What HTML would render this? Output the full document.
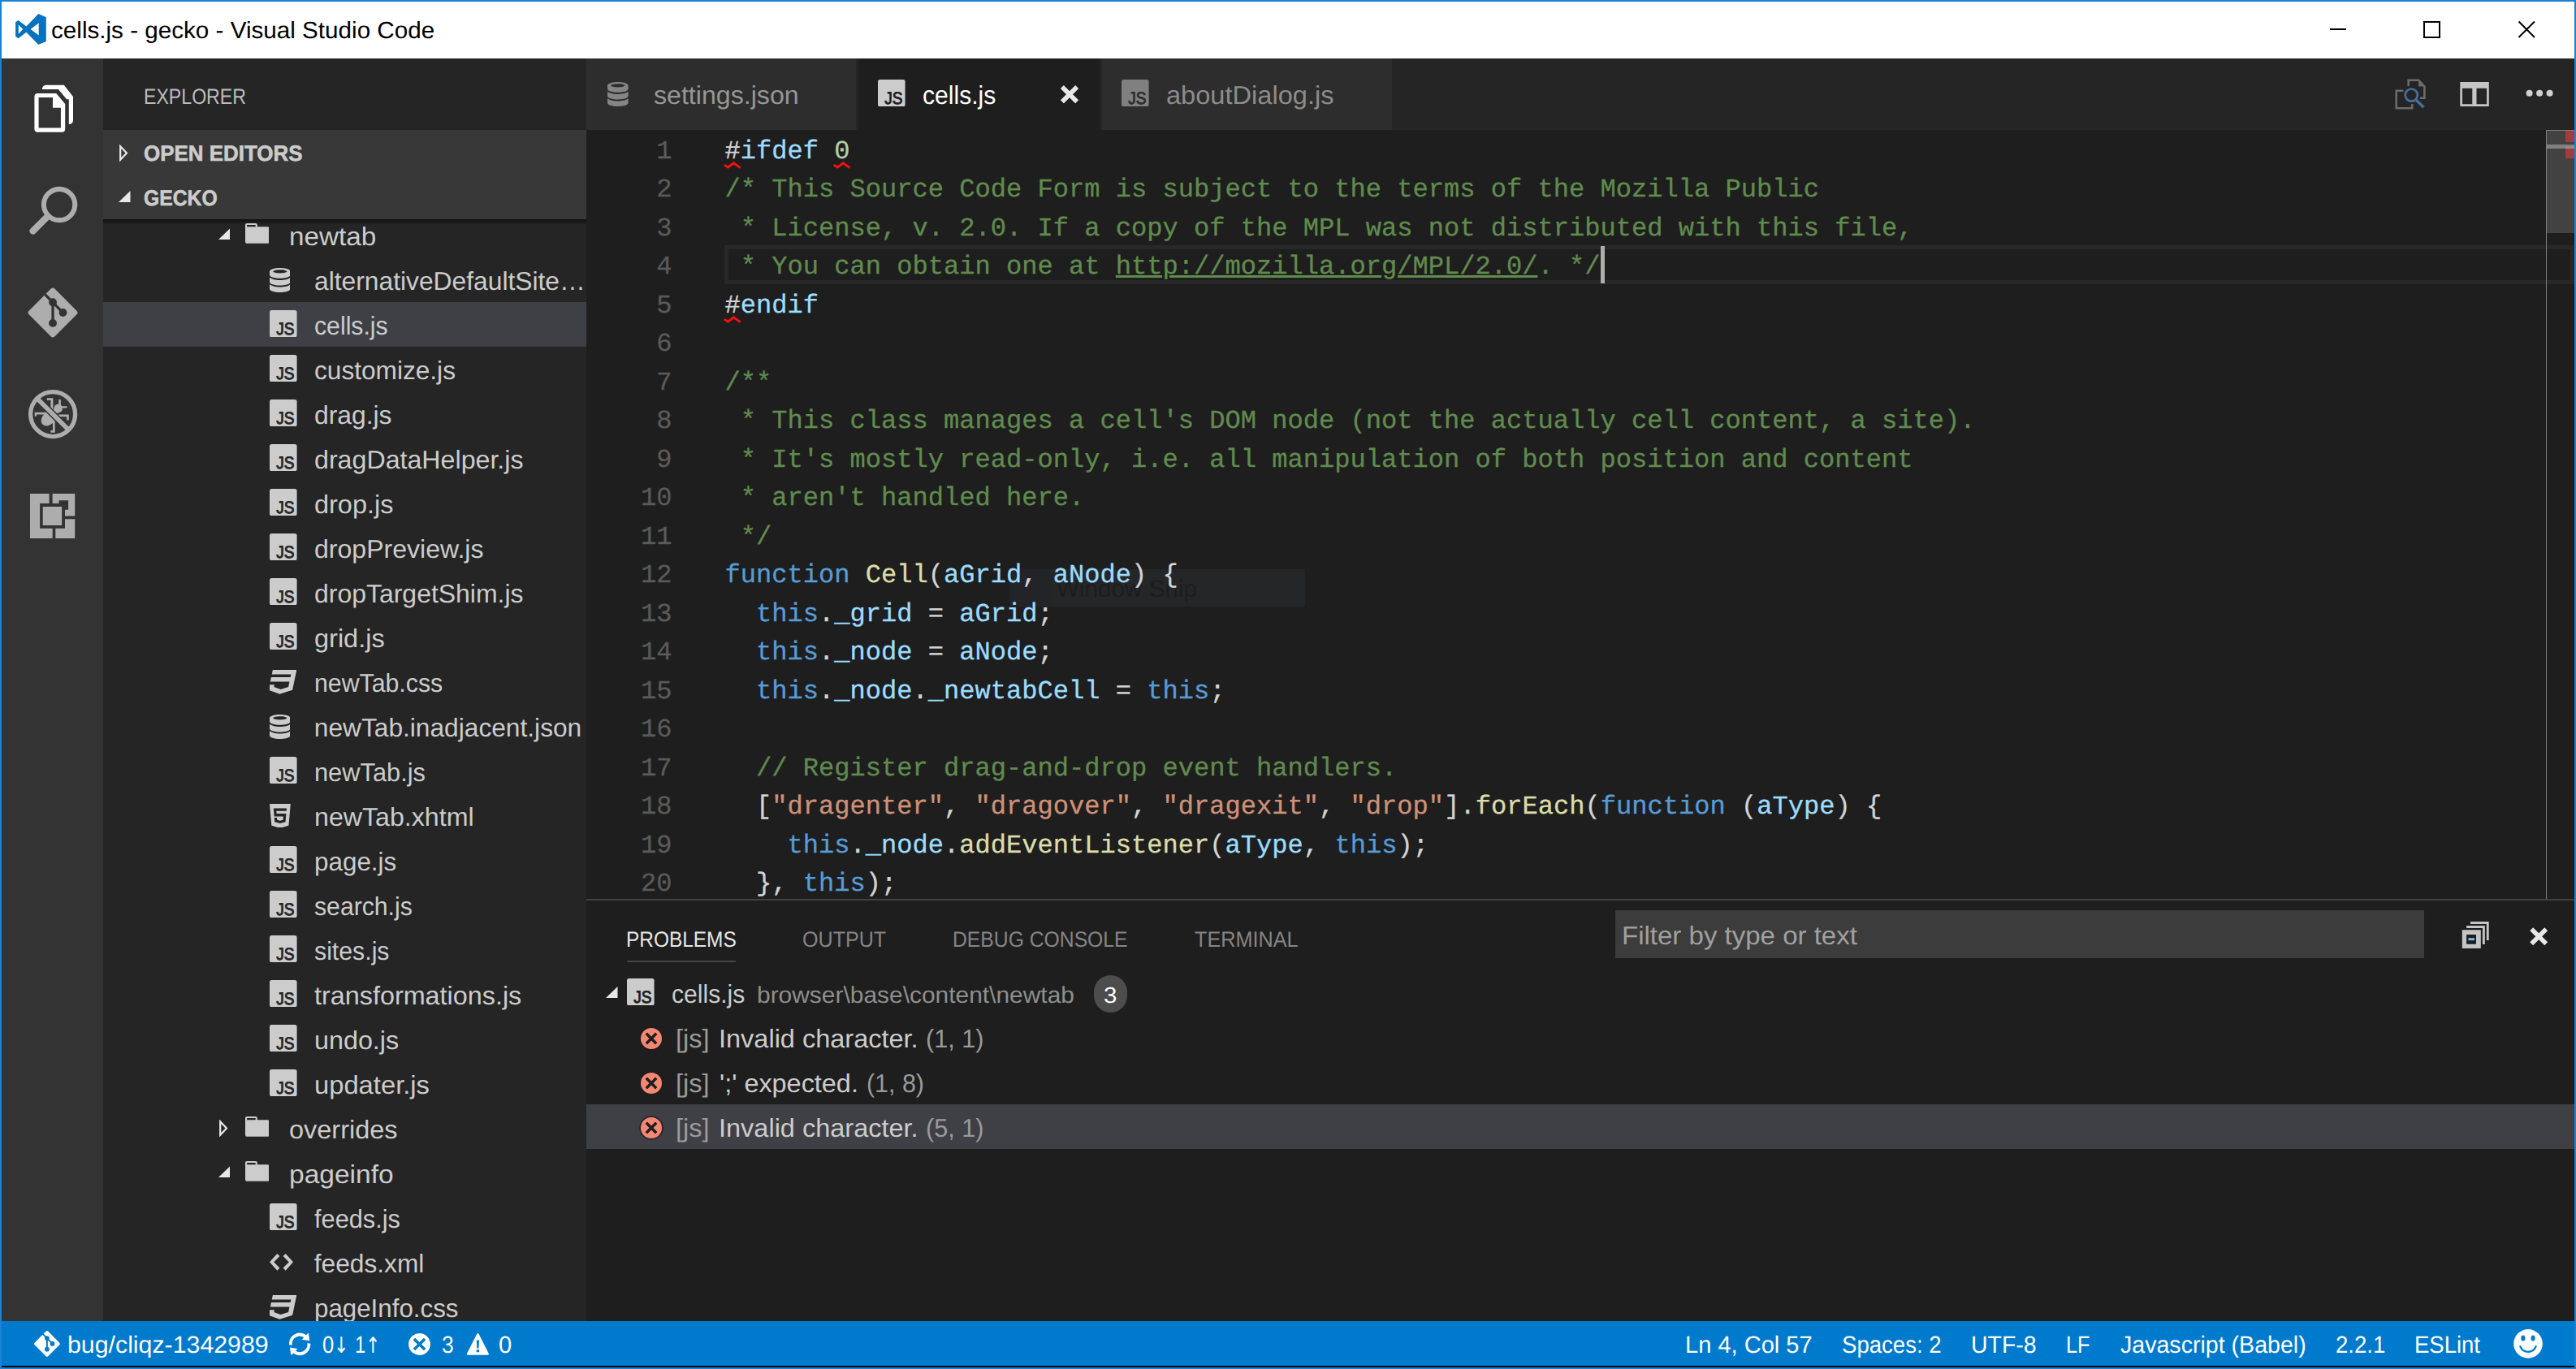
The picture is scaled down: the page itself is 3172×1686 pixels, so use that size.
<!DOCTYPE html>
<html lang="en"><head><meta charset="utf-8"><title>cells.js - gecko - Visual Studio Code</title>
<style>
html,body{margin:0;padding:0}
body{width:3172px;height:1686px;overflow:hidden;position:relative;background:#1883d7;font-family:"Liberation Sans",sans-serif;text-rendering:geometricPrecision;-webkit-font-smoothing:antialiased}
#bg div{position:absolute}
#ic>*{position:absolute}
.t{position:absolute;white-space:pre;line-height:1;transform-origin:0 0}
#code{position:absolute;left:0;top:160px;width:3135px;height:947px;overflow:hidden;font-family:"Liberation Mono",monospace;font-size:32.08px;color:#d4d4d4;-webkit-text-stroke:0.3px}
#code .l{position:absolute;left:892.5px;height:47.5px;line-height:47.5px;white-space:pre}
#code .n{position:absolute;left:722px;width:105.5px;height:47.5px;line-height:47.5px;text-align:right;color:#5a5a5a;white-space:pre}
#code .l span,#code .n span{position:relative;top:2.5px}
.c{color:#608b4e}.k{color:#569cd6}.v{color:#9cdcfe}.f{color:#dcdcaa}.s{color:#ce9178}.d{color:#b5cea8}

</style></head>
<body>
<div id="bg">
<div style="left:2px;top:2px;width:3168px;height:70px;background:#ffffff;"></div>
<div style="left:2px;top:72px;width:125px;height:1555px;background:#333333;"></div>
<div style="left:127px;top:72px;width:595px;height:1555px;background:#252526;"></div>
<div style="left:722px;top:72px;width:2448px;height:88px;background:#252526;"></div>
<div style="left:722px;top:72px;width:332px;height:88px;background:#2d2d2d;"></div>
<div style="left:1056.5px;top:72px;width:297.5px;height:88px;background:#1e1e1e;"></div>
<div style="left:1356.5px;top:72px;width:357.3px;height:88px;background:#2d2d2d;"></div>
<div style="left:722px;top:160px;width:2448px;height:1467px;background:#1e1e1e;"></div>
<div style="left:2px;top:1627px;width:3168px;height:55px;background:#007acc;"></div>
<div style="left:2px;top:1682px;width:3168px;height:2px;background:#000000;"></div>
<div style="left:127px;top:372px;width:595px;height:55px;background:#3f3f46;"></div>
<div style="left:127px;top:160px;width:595px;height:110px;background:#383838;"></div>
<div style="left:127px;top:270px;width:595px;height:7px;background:linear-gradient(rgba(0,0,0,.55),rgba(0,0,0,0));"></div>
<div style="left:892px;top:302px;width:2278px;height:48px;background:transparent;box-sizing:border-box;border:5px solid #282828"></div>
<div style="left:3135px;top:160px;width:1.3px;height:947px;background:#808080;"></div>
<div style="left:3136px;top:160px;width:34px;height:127px;background:#424242;"></div>
<div style="left:3159px;top:160px;width:11px;height:15px;background:#a23d3d;"></div>
<div style="left:3136px;top:178px;width:34px;height:5px;background:#808080;"></div>
<div style="left:3159px;top:180px;width:11px;height:3px;background:#988888;"></div>
<div style="left:3135px;top:160px;width:35px;height:1px;background:#7e7e7e;"></div>
<div style="left:3159px;top:183px;width:11px;height:12px;background:#a23d3d;"></div>
<div style="left:1971px;top:303px;width:5px;height:46px;background:#aeafad;"></div>
<div style="left:1243px;top:701px;width:364px;height:46px;background:#252628;"></div>
<div style="left:1243px;top:701px;width:51.5px;height:46px;background:#222427;"></div>
<div style="left:722px;top:1107px;width:2448px;height:2px;background:#414141;"></div>
<div style="left:772px;top:1183px;width:134px;height:2px;background:#45454d;"></div>
<div style="left:722px;top:1360px;width:2448px;height:55px;background:#3f3f46;"></div>
<div style="left:1989px;top:1121px;width:996px;height:59px;background:#3c3c3c;"></div>
</div>
<div id="ic">
<svg style="left:268.5px;top:281px" width="14.5" height="14" viewBox="0 0 14.5 14"><path fill="#e8e8e8" d="M14.500 0V14H0z"/></svg>
<svg style="left:301.8px;top:275px" width="29.6" height="24.8" viewBox="0 2 14 12" preserveAspectRatio="none"><path fill="#cccccc" d="M13 4H7V3c0-.66-.31-1-1-1H1c-.55 0-1 .45-1 1v10c0 .55.45 1 1 1h12c.55 0 1-.45 1-1V5c0-.55-.45-1-1-1zM6 4H1V3h5v1z"/></svg>
<svg style="left:331.7px;top:329.7px" width="25.6" height="30" viewBox="0 1 12 14" preserveAspectRatio="none"><path fill="#cccccc" d="M6 15c-3.31 0-6-.9-6-2v-2c0-.17.09-.34.21-.5.67.86 3 1.5 5.79 1.5s5.12-.64 5.79-1.5c.13.16.21.33.21.5v2c0 1.1-2.69 2-6 2zm0-4c-3.31 0-6-.9-6-2V7c0-.11.04-.21.09-.31.03-.06.07-.13.12-.19C.88 7.360 3.21 8 6 8s5.120-.64 5.790-1.500c.05.06.09.13.12.19.05.1.09.21.09.31v2c0 1.100-2.690 2-6 2zm0-4c-3.310 0-6-.9-6-2V3c0-1.100 2.690-2 6-2s6 .9 6 2v2c0 1.100-2.690 2-6 2zm0-5c-2.210 0-4 .45-4 1s1.790 1 4 1 4-.45 4-1-1.790-1-4-1z"/></svg>
<svg style="left:332px;top:382px" width="33.600" height="33.400" viewBox="0 0 33.600 33.400"><rect width="33.600" height="33.400" rx="2.600" fill="#cccccc"/><text x="8.300" y="30.400" font-family="Liberation Sans,sans-serif" font-size="21" textLength="22.3" lengthAdjust="spacingAndGlyphs" fill="#252526" stroke="#252526" stroke-width="0.900" stroke-linejoin="round">JS</text></svg>
<svg style="left:332px;top:437px" width="33.600" height="33.400" viewBox="0 0 33.600 33.400"><rect width="33.600" height="33.400" rx="2.600" fill="#cccccc"/><text x="8.300" y="30.400" font-family="Liberation Sans,sans-serif" font-size="21" textLength="22.3" lengthAdjust="spacingAndGlyphs" fill="#252526" stroke="#252526" stroke-width="0.900" stroke-linejoin="round">JS</text></svg>
<svg style="left:332px;top:492px" width="33.600" height="33.400" viewBox="0 0 33.600 33.400"><rect width="33.600" height="33.400" rx="2.600" fill="#cccccc"/><text x="8.300" y="30.400" font-family="Liberation Sans,sans-serif" font-size="21" textLength="22.3" lengthAdjust="spacingAndGlyphs" fill="#252526" stroke="#252526" stroke-width="0.900" stroke-linejoin="round">JS</text></svg>
<svg style="left:332px;top:547px" width="33.600" height="33.400" viewBox="0 0 33.600 33.400"><rect width="33.600" height="33.400" rx="2.600" fill="#cccccc"/><text x="8.300" y="30.400" font-family="Liberation Sans,sans-serif" font-size="21" textLength="22.3" lengthAdjust="spacingAndGlyphs" fill="#252526" stroke="#252526" stroke-width="0.900" stroke-linejoin="round">JS</text></svg>
<svg style="left:332px;top:602px" width="33.600" height="33.400" viewBox="0 0 33.600 33.400"><rect width="33.600" height="33.400" rx="2.600" fill="#cccccc"/><text x="8.300" y="30.400" font-family="Liberation Sans,sans-serif" font-size="21" textLength="22.3" lengthAdjust="spacingAndGlyphs" fill="#252526" stroke="#252526" stroke-width="0.900" stroke-linejoin="round">JS</text></svg>
<svg style="left:332px;top:657px" width="33.600" height="33.400" viewBox="0 0 33.600 33.400"><rect width="33.600" height="33.400" rx="2.600" fill="#cccccc"/><text x="8.300" y="30.400" font-family="Liberation Sans,sans-serif" font-size="21" textLength="22.3" lengthAdjust="spacingAndGlyphs" fill="#252526" stroke="#252526" stroke-width="0.900" stroke-linejoin="round">JS</text></svg>
<svg style="left:332px;top:712px" width="33.600" height="33.400" viewBox="0 0 33.600 33.400"><rect width="33.600" height="33.400" rx="2.600" fill="#cccccc"/><text x="8.300" y="30.400" font-family="Liberation Sans,sans-serif" font-size="21" textLength="22.3" lengthAdjust="spacingAndGlyphs" fill="#252526" stroke="#252526" stroke-width="0.900" stroke-linejoin="round">JS</text></svg>
<svg style="left:332px;top:767px" width="33.600" height="33.400" viewBox="0 0 33.600 33.400"><rect width="33.600" height="33.400" rx="2.600" fill="#cccccc"/><text x="8.300" y="30.400" font-family="Liberation Sans,sans-serif" font-size="21" textLength="22.3" lengthAdjust="spacingAndGlyphs" fill="#252526" stroke="#252526" stroke-width="0.900" stroke-linejoin="round">JS</text></svg>
<svg style="left:332px;top:825px" width="33.3" height="29.8" viewBox="77 -1408 1703 1600" preserveAspectRatio="none"><path fill="#cccccc" transform="scale(1,-1)" d="M275 1408h1505l-266 -1333l-804 -267l-698 267l71 356h297l-29 -147l422 -161l486 161l68 339h-1208l58 297h1209l38 191h-1208z"/></svg>
<svg style="left:331.7px;top:879.7px" width="25.6" height="30" viewBox="0 1 12 14" preserveAspectRatio="none"><path fill="#cccccc" d="M6 15c-3.31 0-6-.9-6-2v-2c0-.17.09-.34.21-.5.67.86 3 1.5 5.79 1.5s5.12-.64 5.79-1.5c.13.16.21.33.21.5v2c0 1.1-2.69 2-6 2zm0-4c-3.31 0-6-.9-6-2V7c0-.11.04-.21.09-.31.03-.06.07-.13.12-.19C.88 7.360 3.21 8 6 8s5.120-.64 5.790-1.500c.05.06.09.13.12.19.05.1.09.21.09.31v2c0 1.100-2.690 2-6 2zm0-4c-3.310 0-6-.9-6-2V3c0-1.100 2.690-2 6-2s6 .9 6 2v2c0 1.100-2.690 2-6 2zm0-5c-2.210 0-4 .45-4 1s1.790 1 4 1 4-.45 4-1-1.790-1-4-1z"/></svg>
<svg style="left:332px;top:932px" width="33.600" height="33.400" viewBox="0 0 33.600 33.400"><rect width="33.600" height="33.400" rx="2.600" fill="#cccccc"/><text x="8.300" y="30.400" font-family="Liberation Sans,sans-serif" font-size="21" textLength="22.3" lengthAdjust="spacingAndGlyphs" fill="#252526" stroke="#252526" stroke-width="0.900" stroke-linejoin="round">JS</text></svg>
<svg style="left:332.4px;top:989.7px" width="25.8" height="29.8" viewBox="0 -1408 1408 1600" preserveAspectRatio="none"><path fill="#cccccc" fill-rule="evenodd" transform="scale(1,-1)" d="M1130 939l16 175h-884l47 -534h612l-22 -228l-197 -53l-196 53l-13 140h-175l22 -278l362 -100h4v1l359 99l50 544h-644l-15 181h674zM0 1408h1408l-128 -1438l-578 -162l-574 162z"/></svg>
<svg style="left:332px;top:1042px" width="33.600" height="33.400" viewBox="0 0 33.600 33.400"><rect width="33.600" height="33.400" rx="2.600" fill="#cccccc"/><text x="8.300" y="30.400" font-family="Liberation Sans,sans-serif" font-size="21" textLength="22.3" lengthAdjust="spacingAndGlyphs" fill="#252526" stroke="#252526" stroke-width="0.900" stroke-linejoin="round">JS</text></svg>
<svg style="left:332px;top:1097px" width="33.600" height="33.400" viewBox="0 0 33.600 33.400"><rect width="33.600" height="33.400" rx="2.600" fill="#cccccc"/><text x="8.300" y="30.400" font-family="Liberation Sans,sans-serif" font-size="21" textLength="22.3" lengthAdjust="spacingAndGlyphs" fill="#252526" stroke="#252526" stroke-width="0.900" stroke-linejoin="round">JS</text></svg>
<svg style="left:332px;top:1152px" width="33.600" height="33.400" viewBox="0 0 33.600 33.400"><rect width="33.600" height="33.400" rx="2.600" fill="#cccccc"/><text x="8.300" y="30.400" font-family="Liberation Sans,sans-serif" font-size="21" textLength="22.3" lengthAdjust="spacingAndGlyphs" fill="#252526" stroke="#252526" stroke-width="0.900" stroke-linejoin="round">JS</text></svg>
<svg style="left:332px;top:1207px" width="33.600" height="33.400" viewBox="0 0 33.600 33.400"><rect width="33.600" height="33.400" rx="2.600" fill="#cccccc"/><text x="8.300" y="30.400" font-family="Liberation Sans,sans-serif" font-size="21" textLength="22.3" lengthAdjust="spacingAndGlyphs" fill="#252526" stroke="#252526" stroke-width="0.900" stroke-linejoin="round">JS</text></svg>
<svg style="left:332px;top:1262px" width="33.600" height="33.400" viewBox="0 0 33.600 33.400"><rect width="33.600" height="33.400" rx="2.600" fill="#cccccc"/><text x="8.300" y="30.400" font-family="Liberation Sans,sans-serif" font-size="21" textLength="22.3" lengthAdjust="spacingAndGlyphs" fill="#252526" stroke="#252526" stroke-width="0.900" stroke-linejoin="round">JS</text></svg>
<svg style="left:332px;top:1317px" width="33.600" height="33.400" viewBox="0 0 33.600 33.400"><rect width="33.600" height="33.400" rx="2.600" fill="#cccccc"/><text x="8.300" y="30.400" font-family="Liberation Sans,sans-serif" font-size="21" textLength="22.3" lengthAdjust="spacingAndGlyphs" fill="#252526" stroke="#252526" stroke-width="0.900" stroke-linejoin="round">JS</text></svg>
<svg style="left:270px;top:1379px" width="11" height="21" viewBox="0 0 11 21"><path fill="none" stroke="#e8e8e8" stroke-width="2.200" d="M1.200 2.200L9 10.500L1.200 18.800z"/></svg>
<svg style="left:301.8px;top:1375px" width="29.6" height="24.8" viewBox="0 2 14 12" preserveAspectRatio="none"><path fill="#cccccc" d="M13 4H7V3c0-.66-.31-1-1-1H1c-.55 0-1 .45-1 1v10c0 .55.45 1 1 1h12c.55 0 1-.45 1-1V5c0-.55-.45-1-1-1zM6 4H1V3h5v1z"/></svg>
<svg style="left:268.5px;top:1436px" width="14.5" height="14" viewBox="0 0 14.5 14"><path fill="#e8e8e8" d="M14.500 0V14H0z"/></svg>
<svg style="left:301.8px;top:1430px" width="29.6" height="24.8" viewBox="0 2 14 12" preserveAspectRatio="none"><path fill="#cccccc" d="M13 4H7V3c0-.66-.31-1-1-1H1c-.55 0-1 .45-1 1v10c0 .55.45 1 1 1h12c.55 0 1-.45 1-1V5c0-.55-.45-1-1-1zM6 4H1V3h5v1z"/></svg>
<svg style="left:332px;top:1482px" width="33.600" height="33.400" viewBox="0 0 33.600 33.400"><rect width="33.600" height="33.400" rx="2.600" fill="#cccccc"/><text x="8.300" y="30.400" font-family="Liberation Sans,sans-serif" font-size="21" textLength="22.3" lengthAdjust="spacingAndGlyphs" fill="#252526" stroke="#252526" stroke-width="0.900" stroke-linejoin="round">JS</text></svg>
<svg style="left:332px;top:1544px" width="29" height="20.7" viewBox="0 3 14 10" preserveAspectRatio="none"><path fill="#cccccc" d="M9.5 3L8 4.5 11.5 8 8 11.5 9.5 13 14 8 9.5 3zm-5 0L0 8l4.5 5L6 11.5 2.500 8 6 4.500 4.500 3z"/></svg>
<svg style="left:332px;top:1595px" width="33.3" height="29.8" viewBox="77 -1408 1703 1600" preserveAspectRatio="none"><path fill="#cccccc" transform="scale(1,-1)" d="M275 1408h1505l-266 -1333l-804 -267l-698 267l71 356h297l-29 -147l422 -161l486 161l68 339h-1208l58 297h1209l38 191h-1208z"/></svg>
<svg style="left:147px;top:178px" width="11" height="21" viewBox="0 0 11 21"><path fill="none" stroke="#e8e8e8" stroke-width="2.200" d="M1.200 2.200L9 10.500L1.200 18.800z"/></svg>
<svg style="left:146px;top:234.5px" width="14.5" height="14" viewBox="0 0 14.5 14"><path fill="#e8e8e8" d="M14.500 0V14H0z"/></svg>
<svg style="left:748px;top:101px" width="25.6" height="30" viewBox="0 1 12 14" preserveAspectRatio="none"><path fill="#858585" d="M6 15c-3.31 0-6-.9-6-2v-2c0-.17.09-.34.21-.5.67.86 3 1.5 5.79 1.5s5.12-.64 5.79-1.5c.13.16.21.33.21.5v2c0 1.1-2.69 2-6 2zm0-4c-3.31 0-6-.9-6-2V7c0-.11.04-.21.09-.31.03-.06.07-.13.12-.19C.88 7.360 3.21 8 6 8s5.120-.64 5.790-1.500c.05.06.09.13.12.19.05.1.09.21.09.31v2c0 1.100-2.690 2-6 2zm0-4c-3.310 0-6-.9-6-2V3c0-1.100 2.690-2 6-2s6 .9 6 2v2c0 1.100-2.690 2-6 2zm0-5c-2.210 0-4 .45-4 1s1.790 1 4 1 4-.45 4-1-1.790-1-4-1z"/></svg>
<svg style="left:1081px;top:98px" width="33.600" height="33.400" viewBox="0 0 33.600 33.400"><rect width="33.600" height="33.400" rx="2.600" fill="#cccccc"/><text x="8.300" y="30.400" font-family="Liberation Sans,sans-serif" font-size="21" textLength="22.3" lengthAdjust="spacingAndGlyphs" fill="#1e1e1e" stroke="#1e1e1e" stroke-width="0.900" stroke-linejoin="round">JS</text></svg>
<svg style="left:1306px;top:105px" width="22" height="22" viewBox="0 0 22 22"><path stroke="#e8e8e8" stroke-width="5" d="M2 2L20 20M20 2L2 20"/></svg>
<svg style="left:1381px;top:98px" width="33.600" height="33.400" viewBox="0 0 33.600 33.400"><rect width="33.600" height="33.400" rx="2.600" fill="#808080"/><text x="8.300" y="30.400" font-family="Liberation Sans,sans-serif" font-size="21" textLength="22.3" lengthAdjust="spacingAndGlyphs" fill="#2d2d2d" stroke="#2d2d2d" stroke-width="0.900" stroke-linejoin="round">JS</text></svg>
<svg style="left:746px;top:1214.5px" width="14.5" height="14" viewBox="0 0 14.5 14"><path fill="#e8e8e8" d="M14.500 0V14H0z"/></svg>
<svg style="left:772px;top:1205px" width="33.600" height="33.400" viewBox="0 0 33.600 33.400"><rect width="33.600" height="33.400" rx="2.600" fill="#cccccc"/><text x="8.300" y="30.400" font-family="Liberation Sans,sans-serif" font-size="21" textLength="22.3" lengthAdjust="spacingAndGlyphs" fill="#1e1e1e" stroke="#1e1e1e" stroke-width="0.900" stroke-linejoin="round">JS</text></svg>
<div style="left:1347px;top:1201px;width:41px;height:46px;border-radius:20.5px;background:#4d4d4d"></div>
<svg style="left:787px;top:1264px" width="30" height="30" viewBox="0 0 30 30"><circle cx="15" cy="15" r="14" fill="#f48771" stroke="#1e1e1e" stroke-width="2"/><path stroke="#1e1e1e" stroke-width="3.400" d="M8.800 8.800L21.200 21.200M21.200 8.800L8.800 21.200"/></svg>
<svg style="left:787px;top:1319px" width="30" height="30" viewBox="0 0 30 30"><circle cx="15" cy="15" r="14" fill="#f48771" stroke="#1e1e1e" stroke-width="2"/><path stroke="#1e1e1e" stroke-width="3.400" d="M8.800 8.800L21.200 21.200M21.200 8.800L8.800 21.200"/></svg>
<svg style="left:787px;top:1374px" width="30" height="30" viewBox="0 0 30 30"><circle cx="15" cy="15" r="14" fill="#f48771" stroke="#2a2a2e" stroke-width="2"/><path stroke="#1e1e1e" stroke-width="3.400" d="M8.800 8.800L21.200 21.200M21.200 8.800L8.800 21.200"/></svg>
<svg style="left:0;top:0" width="3172" height="1686" viewBox="0 0 3172 1686"><path fill="#0572be" fill-rule="evenodd" d="M47.300 17L56.800 21.200V51L47.300 55L32.400 39.800L22.600 47.300L19.100 44.900V27.200L22.600 24.900L32.400 32.400ZM22.800 30.500L28.200 36.100L22.800 41.700ZM47.700 28.200L37.700 36.100L47.700 43.500Z"/>
<path stroke="#000" stroke-width="2" fill="none" d="M2869 36H2889M2985 27H3004V46H2985ZM3101.500 26.500L3121 46M3121 26.500L3101.500 46"/>
<path fill="#fff" fill-rule="evenodd" d="M46.400 114.900H69.300L80.200 128.100V158.800a4 4 0 0 1 -4 4H46.400a4 4 0 0 1 -4 -4V118.900a4 4 0 0 1 4 -4ZM47.600 119.900H65V132.700H74.900V157.400H47.600Z"/>
<path fill="#fff" d="M51.900 110.050C51.900 107 54 104.800 57 104.800H78.800L90 118.900V147.900C90 151 88 153.100 84.800 153.100V122.200H82.100L71.900 110.050Z"/>
<circle cx="73.100" cy="252" r="19.150" fill="none" stroke="#adadad" stroke-width="6.100"/><path stroke="#adadad" stroke-width="8.200" stroke-linecap="round" d="M58.500 266.600L40.600 284.500"/>
<g transform="translate(65.040 385.040)"><rect x="-22.400" y="-22.400" width="44.800" height="44.800" rx="3.200" transform="rotate(45)" fill="#adadad"/><g fill="#333" stroke="#333" stroke-width="3.300"><path d="M0 -12.840V12.860M-9.540 -22.340L12.460 0"/><circle cx="0" cy="-12.840" r="3.300"/><circle cx="12.460" cy="0" r="3.300"/><circle cx="0" cy="12.860" r="3.300"/></g></g>
<g fill="#adadad"><ellipse cx="59.800" cy="515.400" rx="10.300" ry="7.700" transform="rotate(-45 59.800 515.400)"/><circle cx="71.700" cy="502.900" r="5.300"/><path stroke="#adadad" stroke-width="7" d="M62 513L71 504"/><path d="M57.800 490.300H65.400V505H62.400V493H57.800ZM72.300 492H74.900V500.200H82.500V502.500H72.300ZM72 510.400H84.800V517.600H82.100V513.300H72ZM42.700 507.700H57V510.400H45V512.700H42.700ZM65 515H67.700V532.700H62.400V530.100H65Z"/></g><path stroke="#333" stroke-width="8.600" d="M46.300 491.300L83.800 528.800"/><path stroke="#adadad" stroke-width="5.600" d="M45.500 490.500L84.600 529.600"/><circle cx="65.100" cy="510.040" r="27.500" fill="none" stroke="#adadad" stroke-width="5.300"/>
<path fill="#adadad" d="M36.960 607.900H60.600V619.900H49.100V650.800H64.700V663H36.960ZM52.700 623.900H76.200V647.100H52.700ZM64.600 607.900H92.200V635.500H80V627.800H84.100V616.200H72.600V619.900H64.600ZM80 639.200H92.200V663H68.300V650.800H80Z"/>
<path fill="none" stroke="#6b6b6b" stroke-width="2.600" d="M2965.700 106V98.800H2978.200L2985.400 106.400V120.700H2980M2959.500 111.800H2950.700V133.200H2970.200V127.900"/><path fill="#6b6b6b" d="M2978.200 98.800V106.400H2985.400Z"/><circle cx="2969.300" cy="117.100" r="7.600" fill="none" stroke="#44709a" stroke-width="2.700"/><path stroke="#44709a" stroke-width="3.500" d="M2974.800 122.700L2984.500 132.300"/>
<path fill="#c5c5c5" fill-rule="evenodd" d="M3029.300 101.100H3064.800V131H3029.300ZM3032 108.700H3044.300V128.300H3032ZM3049.500 108.700H3062.100V128.300H3049.500Z"/>
<g fill="#d0d0d0"><circle cx="3114.600" cy="114.700" r="4"/><circle cx="3127.100" cy="114.700" r="4"/><circle cx="3139.600" cy="114.700" r="4"/></g>
<path stroke="#e8e8e8" stroke-width="5.500" d="M1308 107.2L1326 125.2M1326 107.2L1308 125.2"/>
<path stroke="#e8e8e8" stroke-width="5.500" d="M3117.2 1144.2L3135.2 1162.2M3135.2 1144.2L3117.2 1162.2"/>
<path fill="#c5c5c5" fill-rule="evenodd" d="M3031.800 1145.300H3054.800V1168.050H3031.800ZM3037.100 1150.900H3049V1162.800H3037.100Z"/><path fill="#c5c5c5" d="M3037.100 1140.100H3059.800V1163.100H3056.900V1143H3037.100ZM3042 1135.100H3064.700V1158.100H3061.800V1138.050H3042Z"/><rect x="3039.400" y="1155.200" width="7.600" height="2.900" fill="#75beff"/>
<path fill="none" stroke="#ff0f0f" stroke-width="2.800" d="M891.8 203.1l4.700 2.900l6.900 -5.200l8.200 5.800"/>
<path fill="none" stroke="#ff0f0f" stroke-width="2.800" d="M1026.6 203.1l4.700 2.900l6.900 -5.200l8.200 5.800"/>
<path fill="none" stroke="#ff0f0f" stroke-width="2.800" d="M891.8 393.1l4.700 2.900l6.900 -5.200l8.200 5.800"/>
<g transform="translate(57.900 1654.900)"><rect x="-11.750" y="-11.750" width="23.500" height="23.500" rx="1.800" transform="rotate(45)" fill="#fff"/><g fill="#007acc" stroke="#007acc" stroke-width="1.900"><path d="M0 -6.800V6.800M-5.400 -12.200L6.600 0"/><circle cx="0" cy="-6.800" r="1.900"/><circle cx="6.600" cy="0" r="1.900"/><circle cx="0" cy="6.800" r="1.900"/></g></g>
<g transform="translate(355.900 1636.700) scale(2.200 2.330)"><path fill="#fff" d="M10.240 7.400a4.150 4.150 0 0 1-1.200 3.600 4.346 4.346 0 0 1-5.410.54L4.800 10.400.5 9.800l.6 4.200 1.310-1.260c2.360 1.740 5.700 1.570 7.840-.54a5.876 5.876 0 0 0 1.740-4.460l-1.750-.34zM2.960 5a4.346 4.346 0 0 1 5.410-.54L7.200 5.600l4.300.6-.6-4.200-1.310 1.260c-2.360-1.740-5.700-1.570-7.850.54C.5 5.030-.06 6.650.01 8.260l1.750.35A4.170 4.170 0 0 1 2.960 5z"/></g>
<circle cx="516.500" cy="1655.500" r="13.400" fill="#fff"/><path stroke="#007acc" stroke-width="3.600" d="M509.900 1648.900L523.100 1662.100M523.100 1648.900L509.900 1662.100"/>
<path fill="#fff" stroke="#fff" stroke-width="2.500" stroke-linejoin="round" d="M588.400 1643.300L600.700 1667.500H576.100Z"/><path fill="#007acc" d="M586.800 1650.500h3.200l-.5 10h-2.200zM586.700 1662.300h3.400v3h-3.400z"/>
<circle cx="3113" cy="1654.900" r="17.800" fill="#fff"/><ellipse cx="3106.850" cy="1648" rx="2.600" ry="3.600" fill="#007acc"/><ellipse cx="3119.100" cy="1648" rx="2.600" ry="3.600" fill="#007acc"/><path fill="none" stroke="#007acc" stroke-width="2.300" stroke-linecap="round" d="M3103.300 1658.200a10.400 10.400 0 0 0 19.400 0"/></svg>
</div>
<div id="tx">
<span class="t" style="left:62.7px;top:23.6px;font-size:29px;color:#000000;transform:scaleX(1.0219);">cells.js - gecko - Visual Studio Code</span>
<span class="t" style="left:176.6px;top:106.0px;font-size:27px;color:#bbbbbb;transform:scaleX(0.8564);">EXPLORER</span>
<span class="t" style="left:176.5px;top:175.9px;font-size:27px;color:#cccccc;font-weight:700;transform:scaleX(0.9606);-webkit-text-stroke:0.6px #cccccc;">OPEN EDITORS</span>
<span class="t" style="left:176.6px;top:231.0px;font-size:27px;color:#cccccc;font-weight:700;transform:scaleX(0.9154);-webkit-text-stroke:0.6px #cccccc;">GECKO</span>
<span class="t" style="left:355.8px;top:276.2px;font-size:31.7px;color:#cccccc;transform:scaleX(1.0497);">newtab</span>
<span class="t" style="left:386.8px;top:331.2px;font-size:31.7px;color:#cccccc;transform:scaleX(1.0027);">alternativeDefaultSite…</span>
<span class="t" style="left:386.8px;top:386.2px;font-size:31.7px;color:#cccccc;transform:scaleX(0.9540);">cells.js</span>
<span class="t" style="left:386.8px;top:441.2px;font-size:31.7px;color:#cccccc;transform:scaleX(0.9978);">customize.js</span>
<span class="t" style="left:386.8px;top:496.2px;font-size:31.7px;color:#cccccc;transform:scaleX(1.0036);">drag.js</span>
<span class="t" style="left:386.8px;top:551.2px;font-size:31.7px;color:#cccccc;transform:scaleX(1.0154);">dragDataHelper.js</span>
<span class="t" style="left:386.8px;top:606.2px;font-size:31.7px;color:#cccccc;transform:scaleX(1.0248);">drop.js</span>
<span class="t" style="left:386.8px;top:661.2px;font-size:31.7px;color:#cccccc;transform:scaleX(1.0116);">dropPreview.js</span>
<span class="t" style="left:386.8px;top:716.2px;font-size:31.7px;color:#cccccc;transform:scaleX(1.0085);">dropTargetShim.js</span>
<span class="t" style="left:386.8px;top:771.2px;font-size:31.7px;color:#cccccc;transform:scaleX(1.0253);">grid.js</span>
<span class="t" style="left:386.8px;top:826.2px;font-size:31.7px;color:#cccccc;transform:scaleX(0.9556);">newTab.css</span>
<span class="t" style="left:386.8px;top:881.2px;font-size:31.7px;color:#cccccc;">newTab.inadjacent.json</span>
<span class="t" style="left:386.8px;top:936.2px;font-size:31.7px;color:#cccccc;transform:scaleX(0.9717);">newTab.js</span>
<span class="t" style="left:386.8px;top:991.2px;font-size:31.7px;color:#cccccc;transform:scaleX(1.0147);">newTab.xhtml</span>
<span class="t" style="left:386.8px;top:1046.2px;font-size:31.7px;color:#cccccc;transform:scaleX(0.9908);">page.js</span>
<span class="t" style="left:386.8px;top:1101.2px;font-size:31.7px;color:#cccccc;transform:scaleX(0.9527);">search.js</span>
<span class="t" style="left:386.8px;top:1156.2px;font-size:31.7px;color:#cccccc;transform:scaleX(0.9552);">sites.js</span>
<span class="t" style="left:386.8px;top:1211.2px;font-size:31.7px;color:#cccccc;transform:scaleX(1.0208);">transformations.js</span>
<span class="t" style="left:386.8px;top:1266.2px;font-size:31.7px;color:#cccccc;transform:scaleX(1.0194);">undo.js</span>
<span class="t" style="left:386.8px;top:1321.2px;font-size:31.7px;color:#cccccc;transform:scaleX(1.0332);">updater.js</span>
<span class="t" style="left:355.8px;top:1376.2px;font-size:31.7px;color:#cccccc;transform:scaleX(1.0241);">overrides</span>
<span class="t" style="left:355.8px;top:1431.2px;font-size:31.7px;color:#cccccc;transform:scaleX(1.0582);">pageinfo</span>
<span class="t" style="left:386.8px;top:1486.2px;font-size:31.7px;color:#cccccc;transform:scaleX(0.9699);">feeds.js</span>
<span class="t" style="left:386.8px;top:1541.2px;font-size:31.7px;color:#cccccc;">feeds.xml</span>
<span class="t" style="left:386.8px;top:1596.2px;font-size:31.7px;color:#cccccc;transform:scaleX(0.9875);clip-path:inset(0 0 0.9px 0);">pageInfo.css</span>
<span class="t" style="left:804.7px;top:102.1px;font-size:31.7px;color:#969696;transform:scaleX(1.0142);">settings.json</span>
<span class="t" style="left:1136.1px;top:102.1px;font-size:31.7px;color:#ffffff;transform:scaleX(0.9492);">cells.js</span>
<span class="t" style="left:1435.8px;top:102.1px;font-size:31.7px;color:#8c8c8c;transform:scaleX(1.0283);">aboutDialog.js</span>
<span class="t" style="left:1301.3px;top:711.3px;font-size:29.5px;color:#1c1d1f;transform:scaleX(1.0055);">Window Snip</span>
<span class="t" style="left:770.7px;top:1143.6px;font-size:27px;color:#e7e7e7;transform:scaleX(0.9046);">PROBLEMS</span>
<span class="t" style="left:988.1px;top:1143.6px;font-size:27px;color:#858585;transform:scaleX(0.9297);">OUTPUT</span>
<span class="t" style="left:1173.2px;top:1143.6px;font-size:27px;color:#858585;transform:scaleX(0.9151);">DEBUG CONSOLE</span>
<span class="t" style="left:1471.0px;top:1143.6px;font-size:27px;color:#858585;transform:scaleX(0.9341);">TERMINAL</span>
<span class="t" style="left:1996.7px;top:1137.2px;font-size:31.7px;color:#a0a0a0;transform:scaleX(1.0418);">Filter by type or text</span>
<span class="t" style="left:826.7px;top:1209.2px;font-size:31.7px;color:#cccccc;transform:scaleX(0.9492);">cells.js</span>
<span class="t" style="left:931.7px;top:1211.9px;font-size:28.5px;color:#8e8e8e;transform:scaleX(1.0500);">browser\base\content\newtab</span>
<span class="t" style="left:1358.9px;top:1211.7px;font-size:27.5px;color:#ffffff;transform:scaleX(1.0714);">3</span>
<span class="t" style="left:831.7px;top:1264.2px;font-size:31.7px;color:#9a9a9a;transform:scaleX(1.0276);">[js]</span>
<span class="t" style="left:884.9px;top:1264.2px;font-size:31.7px;color:#cccccc;transform:scaleX(1.0254);">Invalid character.</span>
<span class="t" style="left:1140.0px;top:1264.2px;font-size:31.7px;color:#9a9a9a;transform:scaleX(0.9663);">(1, 1)</span>
<span class="t" style="left:831.7px;top:1319.2px;font-size:31.7px;color:#9a9a9a;transform:scaleX(1.0276);">[js]</span>
<span class="t" style="left:886.0px;top:1319.2px;font-size:31.7px;color:#cccccc;transform:scaleX(1.0226);">&#x27;;&#x27; expected.</span>
<span class="t" style="left:1066.5px;top:1319.2px;font-size:31.7px;color:#9a9a9a;transform:scaleX(0.9593);">(1, 8)</span>
<span class="t" style="left:831.7px;top:1374.2px;font-size:31.7px;color:#9a9a9a;transform:scaleX(1.0276);">[js]</span>
<span class="t" style="left:884.9px;top:1374.2px;font-size:31.7px;color:#cccccc;transform:scaleX(1.0254);">Invalid character.</span>
<span class="t" style="left:1140.0px;top:1374.2px;font-size:31.7px;color:#9a9a9a;transform:scaleX(0.9663);">(5, 1)</span>
<span class="t" style="left:82.9px;top:1642.0px;font-size:29.3px;color:#ffffff;transform:scaleX(1.0344);">bug/cliqz-1342989</span>
<span class="t" style="left:397.0px;top:1642.0px;font-size:29.3px;color:#ffffff;transform:scaleX(0.8733);">0</span>
<span class="t" style="left:410.9px;top:1643.9px;font-size:27px;color:#ffffff;font-family:'DejaVu Sans', sans-serif;transform:scaleX(0.8154);">↓</span>
<span class="t" style="left:436.6px;top:1642.0px;font-size:29.3px;color:#ffffff;transform:scaleX(0.8077);">1</span>
<span class="t" style="left:449.9px;top:1643.9px;font-size:27px;color:#ffffff;font-family:'DejaVu Sans', sans-serif;transform:scaleX(0.8154);">↑</span>
<span class="t" style="left:544.1px;top:1642.0px;font-size:29.3px;color:#ffffff;transform:scaleX(0.9000);">3</span>
<span class="t" style="left:614.3px;top:1642.0px;font-size:29.3px;color:#ffffff;transform:scaleX(0.9933);">0</span>
<span class="t" style="left:2075.3px;top:1642.0px;font-size:29.3px;color:#ffffff;transform:scaleX(0.9916);">Ln 4, Col 57</span>
<span class="t" style="left:2268.4px;top:1642.0px;font-size:29.3px;color:#ffffff;transform:scaleX(0.9414);">Spaces: 2</span>
<span class="t" style="left:2427.1px;top:1642.0px;font-size:29.3px;color:#ffffff;transform:scaleX(0.9702);">UTF-8</span>
<span class="t" style="left:2544.3px;top:1642.0px;font-size:29.3px;color:#ffffff;transform:scaleX(0.8628);">LF</span>
<span class="t" style="left:2611.0px;top:1642.0px;font-size:29.3px;color:#ffffff;transform:scaleX(0.9755);">Javascript (Babel)</span>
<span class="t" style="left:2875.8px;top:1642.0px;font-size:29.3px;color:#ffffff;transform:scaleX(0.9417);">2.2.1</span>
<span class="t" style="left:2973.1px;top:1642.0px;font-size:29.3px;color:#ffffff;transform:scaleX(0.9385);">ESLint</span>
</div>
<div id="code">
<div class="n" style="top:0.0px"><span>1</span></div><div class="l" style="top:0.0px"><span>#</span><span class="v">ifdef</span><span> </span><span class="d">0</span></div>
<div class="n" style="top:47.5px"><span>2</span></div><div class="l" style="top:47.5px"><span class="c">/* This Source Code Form is subject to the terms of the Mozilla Public</span></div>
<div class="n" style="top:95.0px"><span>3</span></div><div class="l" style="top:95.0px"><span class="c"> * License, v. 2.0. If a copy of the MPL was not distributed with this file,</span></div>
<div class="n" style="top:142.5px"><span>4</span></div><div class="l" style="top:142.5px"><span class="c"> * You can obtain one at </span><span class="c" style="text-decoration:underline">http://mozilla.org/MPL/2.0/</span><span class="c">. */</span></div>
<div class="n" style="top:190.0px"><span>5</span></div><div class="l" style="top:190.0px"><span>#</span><span class="v">endif</span></div>
<div class="n" style="top:237.5px"><span>6</span></div><div class="l" style="top:237.5px"></div>
<div class="n" style="top:285.0px"><span>7</span></div><div class="l" style="top:285.0px"><span class="c">/**</span></div>
<div class="n" style="top:332.5px"><span>8</span></div><div class="l" style="top:332.5px"><span class="c"> * This class manages a cell's DOM node (not the actually cell content, a site).</span></div>
<div class="n" style="top:380.0px"><span>9</span></div><div class="l" style="top:380.0px"><span class="c"> * It's mostly read-only, i.e. all manipulation of both position and content</span></div>
<div class="n" style="top:427.5px"><span>10</span></div><div class="l" style="top:427.5px"><span class="c"> * aren't handled here.</span></div>
<div class="n" style="top:475.0px"><span>11</span></div><div class="l" style="top:475.0px"><span class="c"> */</span></div>
<div class="n" style="top:522.5px"><span>12</span></div><div class="l" style="top:522.5px"><span class="k">function</span><span> </span><span class="f">Cell</span><span>(</span><span class="v">aGrid</span><span>, </span><span class="v">aNode</span><span>) {</span></div>
<div class="n" style="top:570.0px"><span>13</span></div><div class="l" style="top:570.0px"><span>  </span><span class="k">this</span><span>.</span><span class="v">_grid</span><span> = </span><span class="v">aGrid</span><span>;</span></div>
<div class="n" style="top:617.5px"><span>14</span></div><div class="l" style="top:617.5px"><span>  </span><span class="k">this</span><span>.</span><span class="v">_node</span><span> = </span><span class="v">aNode</span><span>;</span></div>
<div class="n" style="top:665.0px"><span>15</span></div><div class="l" style="top:665.0px"><span>  </span><span class="k">this</span><span>.</span><span class="v">_node</span><span>.</span><span class="v">_newtabCell</span><span> = </span><span class="k">this</span><span>;</span></div>
<div class="n" style="top:712.5px"><span>16</span></div><div class="l" style="top:712.5px"></div>
<div class="n" style="top:760.0px"><span>17</span></div><div class="l" style="top:760.0px"><span>  </span><span class="c">// Register drag-and-drop event handlers.</span></div>
<div class="n" style="top:807.5px"><span>18</span></div><div class="l" style="top:807.5px"><span>  [</span><span class="s">"dragenter"</span><span>, </span><span class="s">"dragover"</span><span>, </span><span class="s">"dragexit"</span><span>, </span><span class="s">"drop"</span><span>].</span><span class="f">forEach</span><span>(</span><span class="k">function</span><span> (</span><span class="v">aType</span><span>) {</span></div>
<div class="n" style="top:855.0px"><span>19</span></div><div class="l" style="top:855.0px"><span>    </span><span class="k">this</span><span>.</span><span class="v">_node</span><span>.</span><span class="f">addEventListener</span><span>(</span><span class="v">aType</span><span>, </span><span class="k">this</span><span>);</span></div>
<div class="n" style="top:902.5px"><span>20</span></div><div class="l" style="top:902.5px"><span>  }, </span><span class="k">this</span><span>);</span></div>
</div>
</body></html>
